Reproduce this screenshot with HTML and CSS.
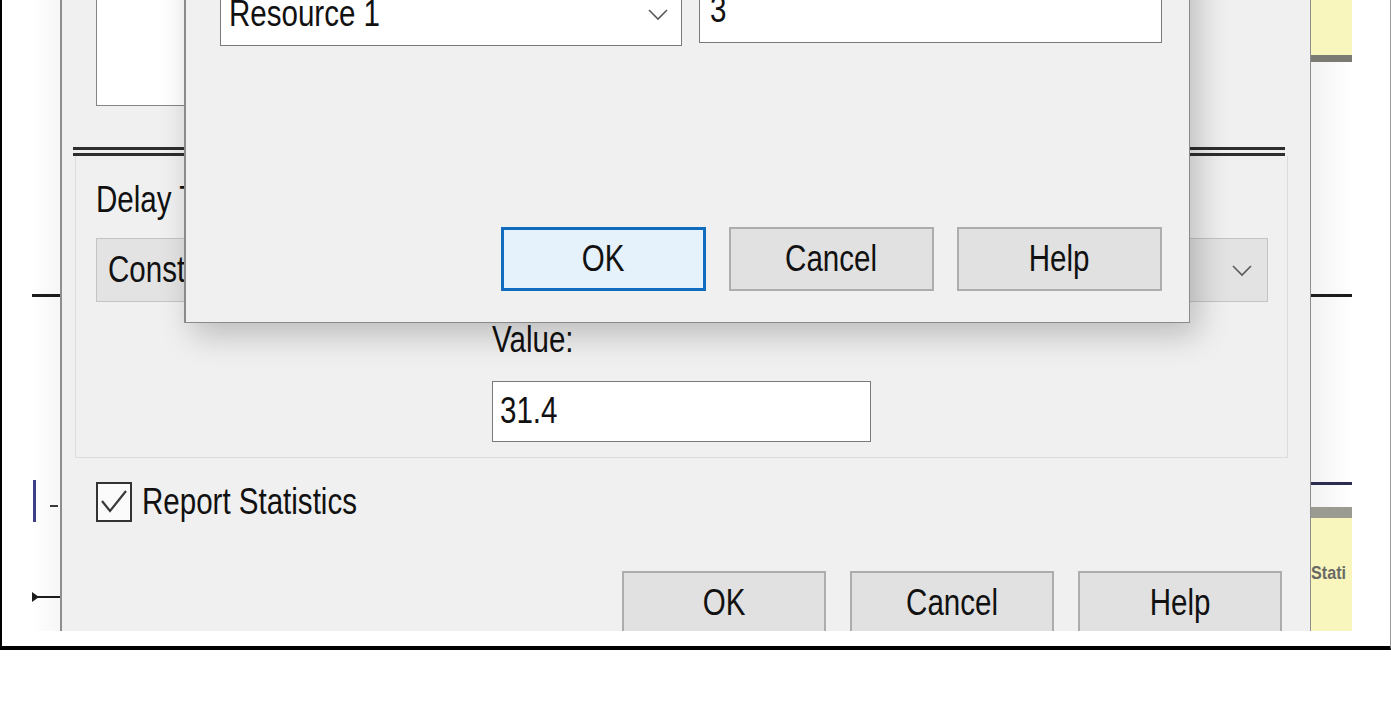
FILE: index.html
```html
<!DOCTYPE html>
<html lang="en">
<head>
    <meta charset="UTF-8">
    <meta name="viewport" content="width=device-width, initial-scale=1.0">
    <title>Process - Delay</title>
    <link rel="stylesheet" href="styles.css">
</head>
<body>
    <div class="frame">
        <div class="shot">
            <!-- model canvas, left edge -->
            <div class="canvas canvas-left">
                <div class="wire wire-top"></div>
                <div class="queue-bar"></div>
                <div class="queue-dash"></div>
                <div class="wire wire-arrow"><span class="arrow-head"></span></div>
            </div>

            <div class="dialog">
                <div class="listbox"></div>

                <div class="group">
                    <div class="group-head"></div>
                    <div class="group-body">
                        <div class="label"><span class="t">Delay Type:</span></div>
                        <div class="combo combo-gray">
                            <span class="t">Constant</span>
                            <svg class="chevron" width="22" height="13" viewBox="0 0 22 13"><polyline points="2,2 11,11 20,2" fill="none" stroke="#5a5a5a" stroke-width="1.6"/></svg>
                        </div>
                        <div class="value-field">
                            <div class="label"><span class="t">Value:</span></div>
                            <div class="textbox"><span class="t">31.4</span></div>
                        </div>
                    </div>
                </div>

                <label class="check-row">
                    <span class="checkbox">
                        <svg width="32" height="36" viewBox="0 0 32 36"><polyline points="4,17 12,27 28,7" fill="none" stroke="#3a3a3a" stroke-width="2.2"/></svg>
                    </span>
                    <span class="t">Report Statistics</span>
                </label>

                <div class="buttons buttons-main">
                    <button class="btn"><span class="t">OK</span></button>
                    <button class="btn"><span class="t">Cancel</span></button>
                    <button class="btn"><span class="t">Help</span></button>
                </div>

                <!-- resource row editor, open over the Process dialog -->
                <div class="popup">
                    <div class="popup-fields">
                        <div class="combo combo-white">
                            <span class="t">Resource 1</span>
                            <svg class="chevron" width="22" height="13" viewBox="0 0 22 13"><polyline points="2,2 11,11 20,2" fill="none" stroke="#5a5a5a" stroke-width="1.6"/></svg>
                        </div>
                        <div class="textbox textbox-qty"><span class="t">3</span></div>
                    </div>
                    <div class="buttons buttons-popup">
                        <button class="btn btn-default"><span class="t">OK</span></button>
                        <button class="btn"><span class="t">Cancel</span></button>
                        <button class="btn"><span class="t">Help</span></button>
                    </div>
                </div>
            </div>

            <!-- model canvas, right edge -->
            <div class="canvas canvas-right">
                <div class="note note-top"></div>
                <div class="wire wire-top"></div>
                <div class="wire-blue"></div>
                <div class="note note-bottom"><span class="note-text">Stati</span></div>
            </div>
        </div>
    </div>
</body>
</html>
```

FILE: styles.css
```css
* {
    margin: 0;
    padding: 0;
    box-sizing: border-box;
}

body {
    background: white;
    font-family: "Liberation Sans", Arial, sans-serif;
    font-size: 36px;
    color: #111;
}

/* the dialog font is a narrow one, squeeze the glyphs */
.t {
    display: inline-block;
    white-space: nowrap;
    transform: scaleX(0.82);
    transform-origin: left center;
}

.frame {
    height: 650px;
    border-left: 2px solid #000;
    border-right: 1px solid #9a9a9a;
    border-bottom: 4px solid #000;
    padding: 0 37px 15px 30px;
}

.shot {
    display: flex;
    height: 631px;
    overflow: hidden;
}

/* ---------- canvas strips ---------- */

.canvas {
    position: relative;
    background: linear-gradient(to right, #ffffff, #f6f6f6);
}

.canvas-left {
    flex: 0 0 28px;
}

.canvas-right {
    flex: 0 0 41px;
    background: linear-gradient(to right, #f2f2f2, #ffffff);
}

.wire {
    position: absolute;
    left: 0;
    right: 0;
    height: 3px;
    background: #1c1c1c;
}

.wire-top {
    top: 294px;
}

.wire-arrow {
    top: 596px;
    height: 2px;
}

.arrow-head {
    position: absolute;
    left: 0;
    top: -4px;
    border-top: 5px solid transparent;
    border-bottom: 5px solid transparent;
    border-left: 7px solid #1c1c1c;
}

.queue-bar {
    position: absolute;
    left: 1px;
    top: 480px;
    width: 3px;
    height: 42px;
    background: #3e3e88;
}

.queue-dash {
    position: absolute;
    left: 18px;
    top: 505px;
    width: 8px;
    height: 2px;
    background: #3a3a3a;
}

.note {
    position: absolute;
    left: 0;
    right: 0;
    background: #f8f6bd;
}

.note-top {
    top: 0;
    height: 62px;
    border-bottom: 7px solid #7b7b73;
}

.note-bottom {
    top: 507px;
    bottom: 0;
    border-top: 11px solid #9b9b92;
}

.note-text {
    position: absolute;
    left: 0;
    top: 44px;
    font-size: 19px;
    font-weight: bold;
    color: #6a6a64;
    transform: scaleX(0.85);
    transform-origin: left center;
}

.wire-blue {
    position: absolute;
    left: 0;
    right: 0;
    top: 482px;
    height: 3px;
    background: #2c2c50;
}

/* ---------- process dialog ---------- */

.dialog {
    position: relative;
    flex: 0 0 1251px;
    background: #f0f0f0;
    border-left: 2px solid #8e8e8e;
    border-right: 1px solid #8e8e8e;
}

.listbox {
    width: 520px;
    height: 106px;
    margin-left: 34px;
    background: white;
    border: 1px solid #858585;
    border-top: none;
}

.group {
    margin: 41px 22px 0 11px;
}

.group-head {
    height: 9px;
    border-top: 3px solid #2e2e2e;
    border-bottom: 3px solid #2e2e2e;
    margin-right: 3px;
}

.group-body {
    margin-left: 2px;
    height: 302px;
    border: 1px solid #dcdcdc;
    border-top: none;
    padding: 24px 19px 0 20px;
}

.label {
    line-height: 40px;
}

.combo {
    display: flex;
    align-items: center;
    justify-content: space-between;
    height: 64px;
    padding: 0 14px 0 11px;
    line-height: 40px;
}

.combo-gray {
    margin-top: 18px;
    background: #e3e3e3;
    border: 1px solid #c4c4c4;
}

.combo-white {
    width: 463px;
    background: white;
    border: 1px solid #7a7a7a;
    padding: 0 12px 0 8px;
}

.value-field {
    margin: 18px 0 0 396px;
}

.textbox {
    width: 379px;
    height: 61px;
    margin-top: 21px;
    padding: 9px 7px 0;
    background: white;
    border: 1px solid #7a7a7a;
    line-height: 40px;
}

.check-row {
    display: flex;
    align-items: center;
    gap: 10px;
    margin: 24px 0 0 34px;
    height: 40px;
    line-height: 40px;
}

.checkbox {
    display: flex;
    align-items: center;
    justify-content: center;
    width: 36px;
    height: 40px;
    background: #fbfbfb;
    border: 2px solid #333;
}

.buttons {
    display: flex;
    justify-content: flex-end;
    gap: 24px;
}

.buttons-main {
    margin-top: 49px;
    padding-right: 28px;
}

.btn {
    width: 204px;
    height: 64px;
    font-family: inherit;
    font-size: 36px;
    color: #111;
    background: #e1e1e1;
    border: 2px solid #adadad;
}

.btn .t {
    transform-origin: center;
}

.btn-default {
    background: #e5f1fb;
    border: 3px solid #0f6cbf;
}

/* ---------- popup ---------- */

.popup {
    position: absolute;
    left: 122px;
    top: -60px;
    width: 1006px;
    height: 383px;
    background: #f0f0f0;
    border: 1px solid #8a8a8a;
    border-left-width: 2px;
    box-shadow: 8px 12px 30px rgba(0, 0, 0, 0.22);
    padding: 41px 27px 0 34px;
}

.popup-fields {
    display: flex;
    gap: 17px;
}

.textbox-qty {
    width: 464px;
    height: 62px;
    margin-top: -1px;
    padding: 8px 10px 0;
}

.buttons-popup {
    margin-top: 181px;
    gap: 23px;
}

.buttons-popup .btn {
    width: 205px;
}
```
